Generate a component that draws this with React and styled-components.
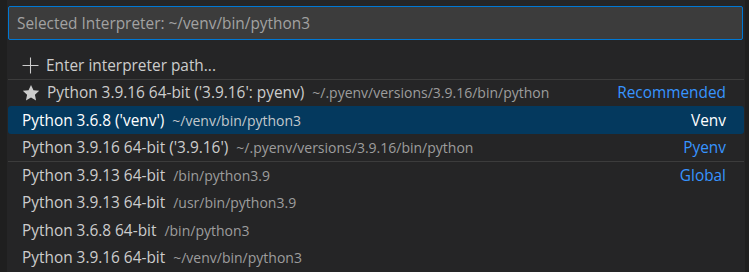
import React from 'react'
import styled, { createGlobalStyle } from 'styled-components'

const Global = createGlobalStyle`
  html, body {
    margin: 0;
    background: #1f1f1f;
    font-family: "Open Sans", "Noto Sans", sans-serif;
  }
`

const interpreters = [
  { icon: 'star', label: "Python 3.9.16 64-bit ('3.9.16': pyenv)", desc: '~/.pyenv/versions/3.9.16/bin/python', tag: 'Recommended', sep: true },
  { label: "Python 3.6.8 ('venv')", desc: '~/venv/bin/python3', tag: 'Venv', active: true },
  { label: "Python 3.9.16 64-bit ('3.9.16')", desc: '~/.pyenv/versions/3.9.16/bin/python', tag: 'Pyenv' },
  { label: 'Python 3.9.13 64-bit', desc: '/bin/python3.9', tag: 'Global', sep: true },
  { label: 'Python 3.9.13 64-bit', desc: '/usr/bin/python3.9' },
  { label: 'Python 3.6.8 64-bit', desc: '/bin/python3' },
  { label: 'Python 3.9.16 64-bit', desc: '~/venv/bin/python3' },
]

const PlusIcon = () => (
  <svg width="17" height="17" viewBox="0 0 16 16">
    <path d="M8 .5v15M.5 8h15" stroke="#cccccc" strokeWidth="1" fill="none" />
  </svg>
)

const StarIcon = () => (
  <svg width="18" height="18" viewBox="0 0 16 16">
    <path d="M8 .8l2.2 4.7 5.1.6-3.8 3.5 1 5.1L8 12.1l-4.5 2.6 1-5.1L.7 6.1l5.1-.6z" fill="#cccccc" />
  </svg>
)

export default function App() {
  return (
    <>
      <Global />
      <Panel>
        <SearchInput placeholder="Selected Interpreter: ~/venv/bin/python3" readOnly />
        <List>
          <Row>
            <Icon><PlusIcon /></Icon>
            <Label>Enter interpreter path...</Label>
          </Row>
          {interpreters.map((it, i) => (
            <Row key={i} $sep={it.sep} $active={it.active}>
              {it.icon === 'star' && <Icon><StarIcon /></Icon>}
              <Label $active={it.active}>{it.label}</Label>
              <Desc $active={it.active}>{it.desc}</Desc>
              {it.tag && <Tag $active={it.active}>{it.tag}</Tag>}
            </Row>
          ))}
        </List>
      </Panel>
    </>
  )
}

const Panel = styled.div`
  margin-left: 7px;
  width: 738px;
  height: 272px;
  box-sizing: border-box;
  padding-top: 6px;
  background: #252526;
  overflow: hidden;
`

const SearchInput = styled.input`
  display: block;
  box-sizing: border-box;
  width: 735px;
  height: 34px;
  margin: 0 0 0 1px;
  padding: 0 8px;
  border: 1px solid #0078d4;
  border-radius: 2px;
  outline: none;
  background: #3c3c3c;
  font-family: inherit;
  font-size: 15.4px;

  &::placeholder {
    color: #a2a2a2;
  }
`

const List = styled.div`
  margin-top: 11px;
`

const Row = styled.div`
  display: flex;
  align-items: center;
  height: 27.5px;
  box-sizing: border-box;
  padding: 0 18px 0 14px;
  border-top: 1px solid ${p => (p.$sep ? '#3c3c3c' : 'transparent')};
  margin: 0 1px;
  border-radius: ${p => (p.$active ? '3px' : '0')};
  background: ${p => (p.$active ? '#04395e' : 'transparent')};
  font-size: 15.4px;
  white-space: nowrap;
`

const Icon = styled.span`
  display: flex;
  margin-right: 7px;
`

const Label = styled.span`
  color: ${p => (p.$active ? '#ffffff' : '#cccccc')};
`

const Desc = styled.span`
  margin-left: 8px;
  color: ${p => (p.$active ? '#c2c8cc' : '#9d9d9d')};
  font-size: 14px;
`

const Tag = styled.span`
  margin-left: auto;
  color: ${p => (p.$active ? '#ffffff' : '#3794ff')};
`
